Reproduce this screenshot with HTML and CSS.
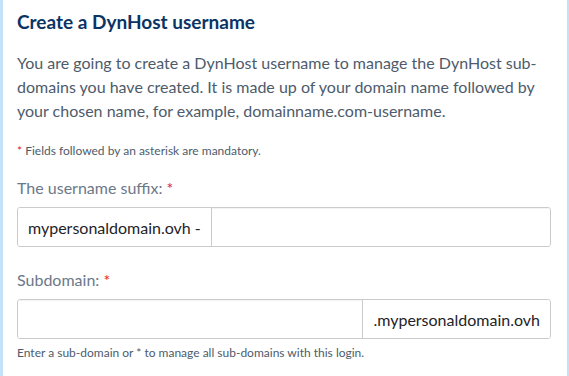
FILE: index.html
```html
<!DOCTYPE html>
<html lang="en">
<head>
    <meta charset="UTF-8">
    <meta name="viewport" content="width=device-width, initial-scale=1.0">
    <title>Create a DynHost username</title>
    <link rel="stylesheet" href="styles.css">
</head>
<body>
    <div class="panel">
        <h2 class="title">Create a DynHost username</h2>
        <p class="intro">You are going to create a DynHost username to manage the DynHost sub-domains you have created. It is made up of your domain name followed by your chosen name, for example, domainname.com-username.</p>
        <p class="note"><span class="required">*</span> Fields followed by an asterisk are mandatory.</p>

        <!-- Suffixe du login -->
        <div class="field">
            <label class="field-label" for="suffix">The username suffix: <span class="required">*</span></label>
            <div class="input-group">
                <span class="addon addon-left">mypersonaldomain.ovh -</span>
                <input type="text" id="suffix" class="text-input">
            </div>
        </div>

        <!-- Sous-domaine -->
        <div class="field">
            <label class="field-label" for="subdomain">Subdomain: <span class="required">*</span></label>
            <div class="input-group">
                <input type="text" id="subdomain" class="text-input">
                <span class="addon addon-right">.mypersonaldomain.ovh</span>
            </div>
            <div class="help">Enter a sub-domain or * to manage all sub-domains with this login.</div>
        </div>
    </div>
</body>
</html>
```

FILE: styles.css
```css
html, body {
    margin: 0;
    padding: 0;
    background: #fff;
    height: 100%;
}
body {
    font-family: 'Lato', 'Open Sans', Arial, sans-serif;
    color: #4d5b6b;
}
.panel {
    box-sizing: border-box;
    min-height: 100%;
    border-left: 3px solid #c3e2f8;
    border-right: 2px solid #c3e2f8;
    padding: 10px 16px 0 14px;
}
.title {
    margin: 0;
    font-size: 19px;
    line-height: 24px;
    font-weight: 700;
    color: #0b3465;
}
.intro {
    margin: 17px 0 0;
    font-size: 16px;
    line-height: 24px;
}
.note {
    margin: 20px 0 0;
    font-size: 12px;
    line-height: 16px;
}
.required {
    color: #e0202d;
}
.field {
    margin-top: 18px;
}
.field + .field {
    margin-top: 22px;
}
.field-label {
    display: block;
    font-size: 16px;
    line-height: 22px;
    color: #6b7889;
    margin-bottom: 8px;
}
.input-group {
    display: flex;
    height: 40px;
    box-sizing: border-box;
    border: 1px solid #cbcbcb;
    border-radius: 3px;
    overflow: hidden;
}
.addon {
    display: flex;
    align-items: center;
    padding: 0 10px;
    font-size: 16px;
    color: #1f2328;
    background: #fff;
    white-space: nowrap;
}
.addon-left {
    border-right: 1px solid #cbcbcb;
}
.addon-right {
    border-left: 1px solid #cbcbcb;
}
.text-input {
    flex: 1;
    min-width: 0;
    border: none;
    margin: 0;
    padding: 0 10px;
    font: inherit;
    background: #fff;
    box-shadow: inset 0 1px 1px rgba(0, 0, 0, 0.05);
}
.help {
    margin-top: 6px;
    font-size: 12px;
    line-height: 16px;
}
```
